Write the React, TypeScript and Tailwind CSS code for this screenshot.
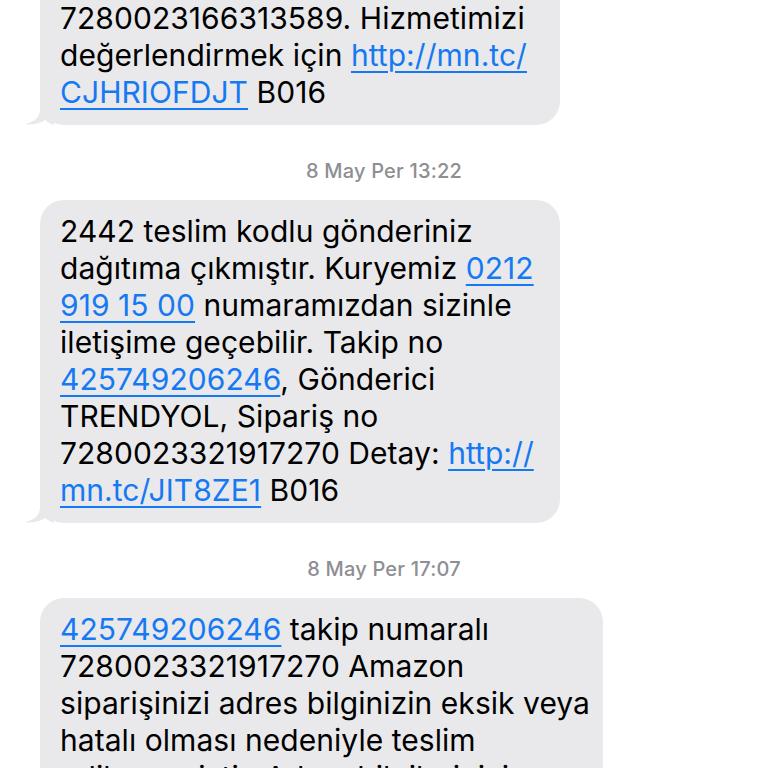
import React from 'react';

// iOS style incoming SMS thread
const Link: React.FC<{ children: React.ReactNode }> = ({ children }) => (
  <span className="text-[#1679f4] underline decoration-[2px] underline-offset-[5px]">{children}</span>
);

const Tail: React.FC = () => (
  <svg
    className="absolute bottom-0 left-[-16px]"
    width="30"
    height="24"
    viewBox="0 0 30 24"
    fill="#e9e9eb"
  >
    <path d="M16 0 L16 8 C16 15 12 20 3 22.6 C1.5 23 2 23.6 3.5 23.6 C11 23.8 17 22 21 19 C24 21.5 27 23 30 24 L30 0 Z" />
  </svg>
);

const Bubble: React.FC<{ width: string; children: React.ReactNode }> = ({ width, children }) => (
  <div className={`relative ml-[40px] ${width}`}>
    <div className="relative rounded-[24px] bg-[#e9e9eb] pl-[20px] pr-4 pt-[13px] pb-[14px] text-[30px] leading-[37px] tracking-[0.05px] text-black whitespace-nowrap">
      {children}
    </div>
    <Tail />
  </div>
);

const Stamp: React.FC<{ text: string }> = ({ text }) => (
  <div className="mt-[35px] mb-[18px] text-center text-[20px] leading-[22px] font-medium tracking-[0.2px] text-[#8e8e93]">
    {text}
  </div>
);

export default function App() {
  return (
    <div
      className="h-[768px] w-[768px] overflow-hidden bg-white"
      style={{ fontFamily: 'Inter, "Noto Sans", sans-serif' }}
    >
      <div className="-mt-[50px]">
        <Bubble width="w-[520px]">
          TRENDYOL, Sipariş no
          <br />
          7280023166313589. Hizmetimizi
          <br />
          değerlendirmek için <Link>http://mn.tc/</Link>
          <br />
          <Link>CJHRIOFDJT</Link> B016
        </Bubble>

        <Stamp text="8 May Per 13:22" />

        <Bubble width="w-[520px]">
          2442 teslim kodlu gönderiniz
          <br />
          dağıtıma çıkmıştır. Kuryemiz <Link>0212</Link>
          <br />
          <Link>919 15 00</Link> numaramızdan sizinle
          <br />
          iletişime geçebilir. Takip no
          <br />
          <Link>425749206246</Link>, Gönderici
          <br />
          TRENDYOL, Sipariş no
          <br />
          7280023321917270 Detay: <Link>http://</Link>
          <br />
          <Link>mn.tc/JIT8ZE1</Link> B016
        </Bubble>

        <Stamp text="8 May Per 17:07" />

        <Bubble width="w-[563px]">
          <Link>425749206246</Link> takip numaralı
          <br />
          7280023321917270 Amazon
          <br />
          siparişinizi adres bilginizin eksik veya
          <br />
          hatalı olması nedeniyle teslim
          <br />
          edilememiştir. Adres bilgilerinizi
          <br />
          güncellemek için <Link>http://mn.tc/</Link>
        </Bubble>
      </div>
    </div>
  );
}
